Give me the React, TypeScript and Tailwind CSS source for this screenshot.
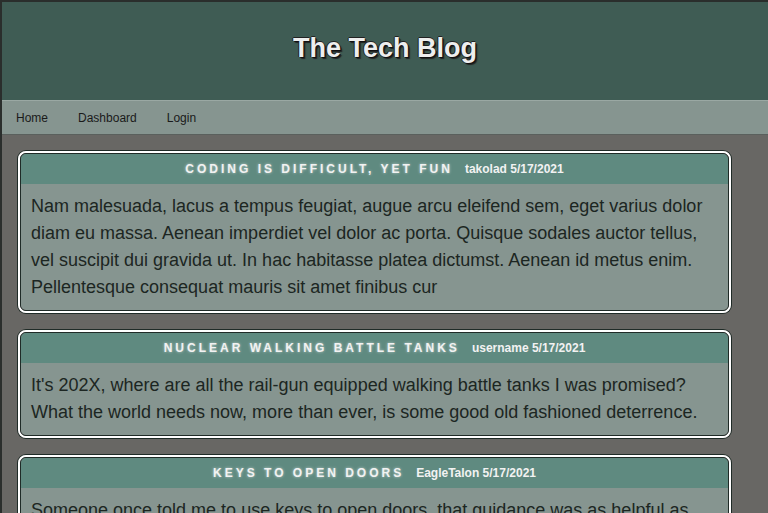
import React from 'react'

type Post = {
  title: string
  user: string
  date: string
  body: string
}

const posts: Post[] = [
  {
    title: 'Coding is difficult, yet fun',
    user: 'takolad',
    date: '5/17/2021',
    body: 'Nam malesuada, lacus a tempus feugiat, augue arcu eleifend sem, eget varius dolor diam eu massa. Aenean imperdiet vel dolor ac porta. Quisque sodales auctor tellus, vel suscipit dui gravida ut. In hac habitasse platea dictumst. Aenean id metus enim. Pellentesque consequat mauris sit amet finibus cur',
  },
  {
    title: 'Nuclear walking battle tanks',
    user: 'username',
    date: '5/17/2021',
    body: "It's 202X, where are all the rail-gun equipped walking battle tanks I was promised? What the world needs now, more than ever, is some good old fashioned deterrence.",
  },
  {
    title: 'Keys to open doors',
    user: 'EagleTalon',
    date: '5/17/2021',
    body: 'Someone once told me to use keys to open doors, that guidance was as helpful as anything I have ever been told before in my whole life.',
  },
]

function PostCard({ post }: { post: Post }) {
  return (
    <div className="rounded-lg border-2 border-white shadow-[0_0_0_1px_#1f2b27]">
      <div className="rounded-md border border-[#1f2b27] overflow-hidden">
        <div className="h-[30px] bg-[#5f8a80] flex items-center justify-center gap-3">
          <span className="uppercase font-bold text-[12px] tracking-[3px] text-[#f2f2f2] [text-shadow:0_0_3px_rgba(255,255,255,0.6)]">
            {post.title}
          </span>
          <span className="font-bold text-[12px] text-[#f2f2f2]">
            {post.user} {post.date}
          </span>
        </div>
        <div className="bg-[#869590] px-[10px] pt-[9px] pb-[9px] text-[18px] leading-[27px] text-[#1c2622]">
          {post.body}
        </div>
      </div>
    </div>
  )
}

export default function App() {
  return (
    <div className="min-h-[513px] bg-[#686764] border-t-2 border-l-2 border-[#2a2e2c] font-['Liberation_Sans',Arial,sans-serif]">
      <header className="h-[98px] pb-[6px] bg-[#3f5c54] flex items-center justify-center">
        <h1 className="text-[27px] font-bold text-[#eeeeee] [text-shadow:1px_1px_0_#111,2px_2px_1px_#222,-1px_0_0_#222,0_-1px_0_#222]">
          The Tech Blog
        </h1>
      </header>
      <nav className="h-[35px] bg-[#869590] border-t border-[#9aa8a3] border-b border-b-[#5a605d] flex items-center gap-[30px] px-[14px] text-[12px] text-[#1a1a1a]">
        <a>Home</a>
        <a>Dashboard</a>
        <a>Login</a>
      </nav>
      <main className="flex flex-col gap-[17px] pt-[16px] pl-[16px] pr-[37px]">
        {posts.map((p) => (
          <PostCard key={p.title} post={p} />
        ))}
      </main>
    </div>
  )
}
